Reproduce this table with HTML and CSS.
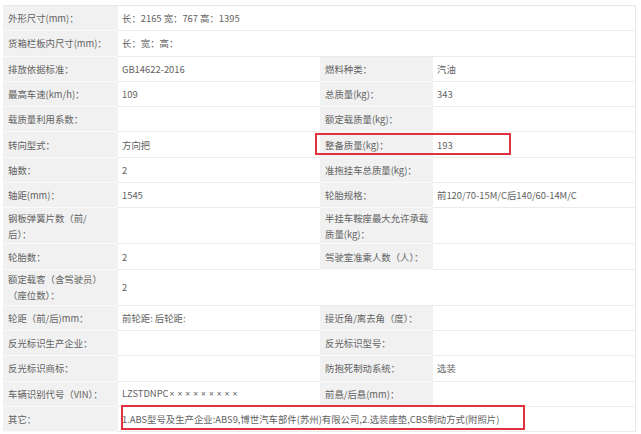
FILE: index.html
```html
<!DOCTYPE html>
<html lang="zh-CN">
<head>
    <meta charset="UTF-8">
    <meta name="viewport" content="width=device-width, initial-scale=1.0">
    <title>车辆参数</title>
    <link rel="stylesheet" href="styles.css">
</head>
<body>
    <div class="sheet">
        <table class="params">
            <colgroup>
                <col class="c-label">
                <col class="c-value">
                <col class="c-label2">
                <col class="c-value">
            </colgroup>
            <tr>
                <td class="label">外形尺寸(mm)：</td>
                <td colspan="3">长：2165 宽：767 高：1395</td>
            </tr>
            <tr>
                <td class="label">货箱栏板内尺寸(mm)：</td>
                <td colspan="3">长：宽：高：</td>
            </tr>
            <tr>
                <td class="label">排放依据标准：</td>
                <td>GB14622-2016</td>
                <td class="label">燃料种类：</td>
                <td>汽油</td>
            </tr>
            <tr>
                <td class="label">最高车速(km/h)：</td>
                <td>109</td>
                <td class="label">总质量(kg)：</td>
                <td>343</td>
            </tr>
            <tr>
                <td class="label">载质量利用系数：</td>
                <td></td>
                <td class="label">额定载质量(kg)：</td>
                <td></td>
            </tr>
            <tr>
                <td class="label">转向型式：</td>
                <td>方向把</td>
                <td class="label">整备质量(kg)：</td>
                <td>193</td>
            </tr>
            <tr>
                <td class="label">轴数：</td>
                <td>2</td>
                <td class="label">准拖挂车总质量(kg)：</td>
                <td></td>
            </tr>
            <tr>
                <td class="label">轴距(mm)：</td>
                <td>1545</td>
                <td class="label">轮胎规格：</td>
                <td>前120/70-15M/C后140/60-14M/C</td>
            </tr>
            <tr class="tall">
                <td class="label">钢板弹簧片数（前/<br>后）：</td>
                <td></td>
                <td class="label">半挂车鞍座最大允许承载<br>质量(kg)：</td>
                <td></td>
            </tr>
            <tr>
                <td class="label">轮胎数：</td>
                <td>2</td>
                <td class="label">驾驶室准乘人数（人）：</td>
                <td></td>
            </tr>
            <tr class="tall">
                <td class="label">额定载客（含驾驶员）<br>（座位数）：</td>
                <td colspan="3">2</td>
            </tr>
            <tr>
                <td class="label">轮距（前/后)mm：</td>
                <td>前轮距: 后轮距:</td>
                <td class="label">接近角/离去角（度）：</td>
                <td></td>
            </tr>
            <tr>
                <td class="label">反光标识生产企业：</td>
                <td></td>
                <td class="label">反光标识型号：</td>
                <td></td>
            </tr>
            <tr>
                <td class="label">反光标识商标：</td>
                <td></td>
                <td class="label">防抱死制动系统：</td>
                <td>选装</td>
            </tr>
            <tr>
                <td class="label">车辆识别代号（VIN）：</td>
                <td>LZSTDNPC<span class="mask">×××××××××</span></td>
                <td class="label">前悬/后悬(mm)：</td>
                <td></td>
            </tr>
            <tr>
                <td class="label">其它：</td>
                <td colspan="3">1.ABS型号及生产企业:ABS9,博世汽车部件(苏州)有限公司,2.选装座垫,CBS制动方式(附照片)</td>
            </tr>
        </table>
        <!-- highlight marks -->
        <div class="mark mark-weight"></div>
        <div class="mark mark-other"></div>
    </div>
</body>
</html>
```

FILE: styles.css
```css
body {
    margin: 0;
    padding: 0;
    background-color: #ffffff;
    font-family: "Noto Sans CJK SC", "Noto Sans", sans-serif;
}

.sheet {
    position: relative;
    width: 632px;
    margin: 5px 0 0 3px;
}

.params {
    width: 632px;
    table-layout: fixed;
    border-collapse: collapse;
    border-top: 1px solid #e8e8e8;
    border-right: 1px solid #e8e8e8;
    font-size: 9.4px;
    color: #626262;
}

.c-label {
    width: 115px;
}

.c-label2 {
    width: 113px;
}

.c-value {
    width: 202px;
}

.params td {
    height: 24.3px;
    padding: 0 0 0 4px;
    border-bottom: 1px solid #ebebeb;
    white-space: nowrap;
    line-height: 16px;
    vertical-align: middle;
}

.params td.label {
    background-color: #f1f1f1;
    border-bottom-color: #fafafa;
    padding-left: 5px;
}

.params tr.tall td {
    height: 35px;
}

.mask {
    font-family: "Noto Sans", sans-serif;
    font-size: 8.5px;
    letter-spacing: 3px;
    margin-left: 1px;
}

.mark {
    position: absolute;
    border: 2px solid #e0313c;
    box-sizing: border-box;
}

.mark-weight {
    left: 312px;
    top: 128px;
    width: 196px;
    height: 22px;
}

.mark-other {
    left: 118px;
    top: 400px;
    width: 404px;
    height: 25px;
}
```
